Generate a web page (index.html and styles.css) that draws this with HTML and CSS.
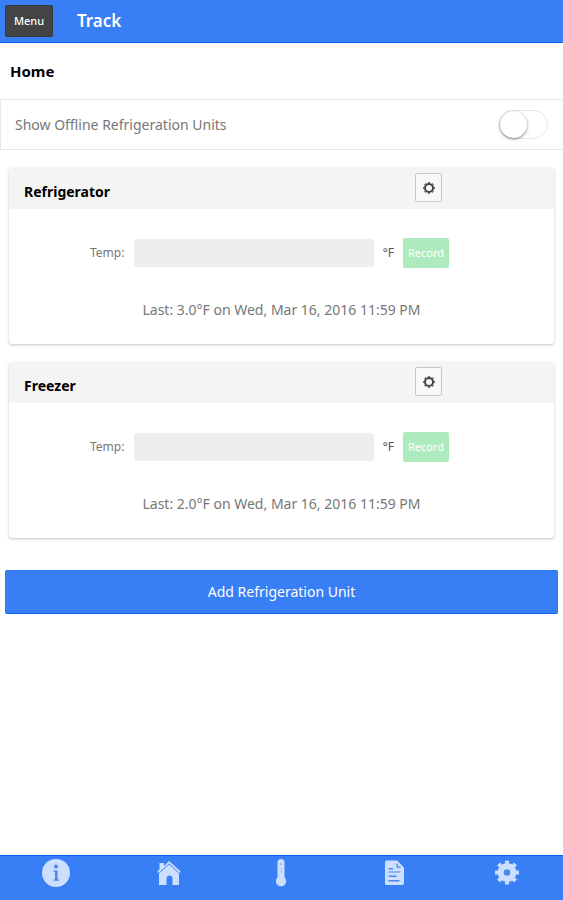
FILE: index.html
```html
<!DOCTYPE html>
<html lang="en">
<head>
<meta charset="utf-8">
<meta name="viewport" content="width=device-width, initial-scale=1">
<title>Track</title>
<link rel="stylesheet" href="styles.css">
</head>
<body>
<header class="bar">
  <button class="menu-button" type="button">Menu</button>
  <h1 class="bar-title">Track</h1>
</header>
<main class="content">
  <h2 class="page-title">Home</h2>
  <label class="toggle-row">
    <span>Show Offline Refrigeration Units</span>
    <input class="toggle" type="checkbox" role="switch">
  </label>
  <section class="card">
    <div class="card-header">
      <h3 class="card-title">Refrigerator</h3>
      <button class="settings-button" type="button" aria-label="Refrigerator settings">
        <svg class="settings-icon" viewBox="0 0 14 14"><circle cx="7" cy="7" r="4"/><circle class="teeth" cx="7" cy="7" r="5.5" pathLength="32"/></svg>
      </button>
    </div>
    <form class="record-row">
      <label for="temp-refrigerator">Temp:</label>
      <input class="temp-input" id="temp-refrigerator" type="text">
      <span class="unit">°F</span>
      <button class="record-button" type="button">Record</button>
    </form>
    <p class="last">Last: 3.0°F on Wed, Mar 16, 2016 11:59 PM</p>
  </section>
  <section class="card">
    <div class="card-header">
      <h3 class="card-title">Freezer</h3>
      <button class="settings-button" type="button" aria-label="Freezer settings">
        <svg class="settings-icon" viewBox="0 0 14 14"><circle cx="7" cy="7" r="4"/><circle class="teeth" cx="7" cy="7" r="5.5" pathLength="32"/></svg>
      </button>
    </div>
    <form class="record-row">
      <label for="temp-freezer">Temp:</label>
      <input class="temp-input" id="temp-freezer" type="text">
      <span class="unit">°F</span>
      <button class="record-button" type="button">Record</button>
    </form>
    <p class="last">Last: 2.0°F on Wed, Mar 16, 2016 11:59 PM</p>
  </section>
  <button class="add-button" type="button">Add Refrigeration Unit</button>
</main>
<nav class="tabs">
  <a class="tab" href="#info" aria-label="Information">
    <svg class="tab-icon" viewBox="0 0 28 28"><circle cx="14" cy="14" r="14"/><g class="cut"><circle cx="14" cy="7.6" r="2"/><path d="M11.500 11.500h4v9h1.500v1.300h-5.500v-1.300H13v-7.700h-1.500z"/></g></svg>
  </a>
  <a class="tab" href="#home" aria-label="Home">
    <svg class="tab-icon" viewBox="0 0 28 28"><path d="M4.500 4h4.500v3L14 2l11.700 10.500-1.200 1.400L14 4.500 3.500 13.900l-1.200-1.400 2.200-2z"/><path d="M14 5.500l10 9V26h-6.500v-6.500c0-4-6-4-6 0V26H4V14.500z"/></svg>
  </a>
  <a class="tab" href="#temperature" aria-label="Temperature">
    <svg class="tab-icon" viewBox="0 0 28 28"><path d="M10.500 3.500a3.500 3.500 0 0 1 7 0v14.700a5.200 5.200 0 1 1-7 0z"/><g class="cut faint"><circle cx="14" cy="5" r="1"/><path d="M13.500 9h1v1h-1zM14 11h1v3h-1z"/></g></svg>
  </a>
  <a class="tab" href="#reports" aria-label="Reports">
    <svg class="tab-icon" viewBox="0 0 28 28"><path d="M6.500 1.500h10.800L24 8.500V24q0 2-2 2H6.500q-1.500 0-1.500-1.500V3q0-1.500 1.500-1.500z"/><path class="cut" d="M16.500 4.500h1.200v3h3v1.300h-4.200zM8.500 9h4.500v1.400H8.500zM8.500 12.500h12v1h-12zM8.500 16.500h8v1.600h-8zM8.500 21h11v1.600h-11z"/></svg>
  </a>
  <a class="tab" href="#settings" aria-label="Settings">
    <svg class="tab-icon" viewBox="0 0 28 28"><circle class="gear-teeth" cx="14" cy="13.500" r="10" pathLength="16"/><circle cx="14" cy="13.500" r="9.500"/><circle class="cut" cx="14" cy="13.500" r="3.300"/></svg>
  </a>
</nav>
</body>
</html>
```

FILE: styles.css
```css
* {
  box-sizing: border-box;
}

body {
  display: flex;
  flex-direction: column;
  min-height: 100vh;
  margin: 0;
  background: #fff;
  color: #777;
  font: 14px/20px "Noto Sans", "Open Sans", sans-serif;
}

button,
input {
  margin: 0;
  padding: 0;
  border: 0;
  font: inherit;
}

h1,
h2,
h3,
p {
  margin: 0;
}

.bar {
  display: flex;
  align-items: center;
  gap: 24px;
  height: 43px;
  padding: 0 5px;
  border-bottom: 1px solid #0c63ee;
  background: #387ef5;
}

.menu-button {
  width: 48px;
  height: 32px;
  border: 1px solid #383838;
  border-radius: 2px;
  background: #444;
  color: #fff;
  font-size: 11px;
  font-weight: 500;
}

.bar-title {
  padding-bottom: 1px;
  color: #fff;
  font-size: 17px;
  font-weight: 600;
}

.content {
  flex: 1;
}

.page-title {
  padding: 18px 10px;
  color: #000;
  font-size: 15px;
  font-weight: 700;
}

.toggle-row {
  display: flex;
  align-items: center;
  justify-content: space-between;
  height: 51px;
  padding: 0 15px 0 14px;
  border: 1px solid #e8e8e8;
  border-width: 1px 0 1px 1px;
}

.toggle {
  width: 49px;
  height: 29px;
  border: 1px solid #e6e6e6;
  border-radius: 15px;
  background: #fff;
  appearance: none;
}

.toggle::before {
  content: "";
  display: block;
  width: 27px;
  height: 27px;
  border-radius: 50%;
  background: #fff;
  box-shadow: 0 1px 3px rgba(0, 0, 0, 0.5);
}

.toggle:checked::before {
  margin-left: auto;
}

.card {
  margin: 18px 9px 0;
  border-radius: 3px;
  background: #fff;
  box-shadow: 0 1px 3px rgba(0, 0, 0, 0.24);
  overflow: hidden;
}

.card-header {
  display: flex;
  align-items: flex-start;
  justify-content: space-between;
  height: 41px;
  padding: 5px 112px 0 15px;
  background: #f4f4f4;
}

.card-title {
  padding-top: 9px;
  color: #000;
  font-size: 14px;
  font-weight: 700;
}

.settings-button {
  display: grid;
  place-items: center;
  width: 27px;
  height: 29px;
  border: 1px solid #c8c8c8;
  border-radius: 2px;
  background: #f8f8f8;
}

.settings-icon {
  width: 14px;
  height: 14px;
  fill: none;
  stroke: #444;
  stroke-width: 2;
}

.settings-icon .teeth {
  stroke-width: 1;
  stroke-dasharray: 2 2;
  stroke-dashoffset: 1;
}

.record-row {
  display: flex;
  align-items: center;
  padding: 29px 105px 0 81px;
  font-size: 12px;
}

.temp-input {
  flex: 1;
  min-width: 0;
  height: 28px;
  margin: 0 9px 0 10px;
  padding: 0 8px;
  border-radius: 3px;
  background: #eee;
}

.unit {
  margin-right: 9px;
  color: #555;
}

.record-button {
  width: 46px;
  height: 30px;
  border-radius: 2px;
  background: #adebbf;
  color: #fff;
  font-size: 11px;
}

.last {
  padding: 32px 0 24px;
  text-align: center;
}

.add-button {
  display: block;
  width: calc(100% - 10px);
  height: 44px;
  margin: 32px 5px 16px;
  border: 1px solid #2f78f3;
  border-bottom-color: #0c63ee;
  border-radius: 2px;
  background: #387ef5;
  color: #fff;
}

.tabs {
  display: flex;
  height: 45px;
  border-top: 1px solid #0c63ee;
  background: #387ef5;
}

.tab {
  flex: 1;
  display: flex;
  align-items: flex-start;
  justify-content: center;
  padding-top: 3px;
}

.tab-icon {
  width: 28px;
  height: 28px;
  fill: #cddfff;
}

.tab-icon .cut {
  fill: #4a87ed;
}

.tab-icon .faint {
  opacity: 0.5;
}

.tab-icon .gear-teeth {
  fill: none;
  stroke: #cddfff;
  stroke-width: 4;
  stroke-dasharray: 1 1;
  stroke-dashoffset: 0.5;
}
```
